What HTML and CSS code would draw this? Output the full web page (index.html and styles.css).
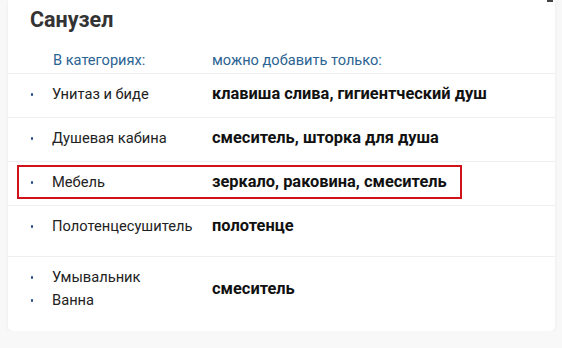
FILE: index.html
```html
<!DOCTYPE html>
<html lang="ru">
<head>
  <meta charset="UTF-8">
  <title>Санузел</title>
  <link rel="stylesheet" href="styles.css">
</head>
<body>
  <div class="card">
    <span class="corner-mark"></span>
    <h2 class="title">Санузел</h2>

    <div class="head">
      <span class="col-cats">В категориях:</span>
      <span class="col-items">можно добавить только:</span>
    </div>

    <div class="row">
      <div class="row-inner">
        <ul class="cats"><li>Унитаз и биде</li></ul>
        <div class="items">клавиша слива, гигиентческий душ</div>
      </div>
    </div>

    <div class="row">
      <div class="row-inner">
        <ul class="cats"><li>Душевая кабина</li></ul>
        <div class="items">смеситель, шторка для душа</div>
      </div>
    </div>

    <div class="row active">
      <div class="row-inner">
        <ul class="cats"><li>Мебель</li></ul>
        <div class="items">зеркало, раковина, смеситель</div>
      </div>
    </div>

    <div class="row tall">
      <div class="row-inner">
        <ul class="cats"><li>Полотенцесушитель</li></ul>
        <div class="items">полотенце</div>
      </div>
    </div>

    <div class="row last">
      <div class="row-inner">
        <ul class="cats"><li>Умывальник</li><li>Ванна</li></ul>
        <div class="items">смеситель</div>
      </div>
    </div>
  </div>
</body>
</html>
```

FILE: styles.css
```css
body {
  margin: 0;
  background: #f8f8f8;
  font-family: Roboto, 'Noto Sans', sans-serif;
  color: #222;
}

.card {
  position: relative;
  margin: 0 7px 0 8px;
  background: #fff;
  border-radius: 0 0 5px 5px;
  box-shadow: 0 1px 4px rgba(0, 0, 0, 0.05);
}

.corner-mark {
  position: absolute;
  top: 0;
  right: 2px;
  width: 6px;
  height: 2px;
  background: #444;
}

.title {
  margin: 0;
  padding: 8px 22px 0;
  font-size: 21.5px;
  line-height: 24px;
  font-weight: 700;
  color: #333;
}

.head {
  display: flex;
  padding: 18px 0 3px 45px;
  font-size: 14.6px;
  line-height: 20px;
  color: #2b6393;
  border-bottom: 1px solid #efefef;
}

.col-cats {
  width: 159px;
}

.row {
  border-bottom: 1px solid #efefef;
}

.row.last {
  border-bottom: none;
  padding-bottom: 8px;
}

.row.tall {
  padding-bottom: 7px;
}

.row-inner {
  display: flex;
  align-items: center;
  width: 445px;
  margin: 3px 0 6px 9px;
  padding: 5px 0 5px 12px;
  border: 2px solid transparent;
  box-sizing: border-box;
}

.row.active .row-inner {
  border-color: #d0121b;
}

.cats {
  flex: none;
  list-style: none;
  margin: 0;
  padding: 0;
  width: 181px;
  font-size: 14.7px;
  line-height: 20px;
}

.cats li {
  display: flex;
  align-items: center;
  gap: 19px;
}

.cats li + li {
  margin-top: 3px;
}

.cats li::before {
  content: "";
  width: 2px;
  height: 3px;
  border-radius: 1px;
  background: #1f4a82;
}

.items {
  font-size: 16.4px;
  line-height: 20px;
  font-weight: 700;
  color: #111;
  white-space: nowrap;
}
```
